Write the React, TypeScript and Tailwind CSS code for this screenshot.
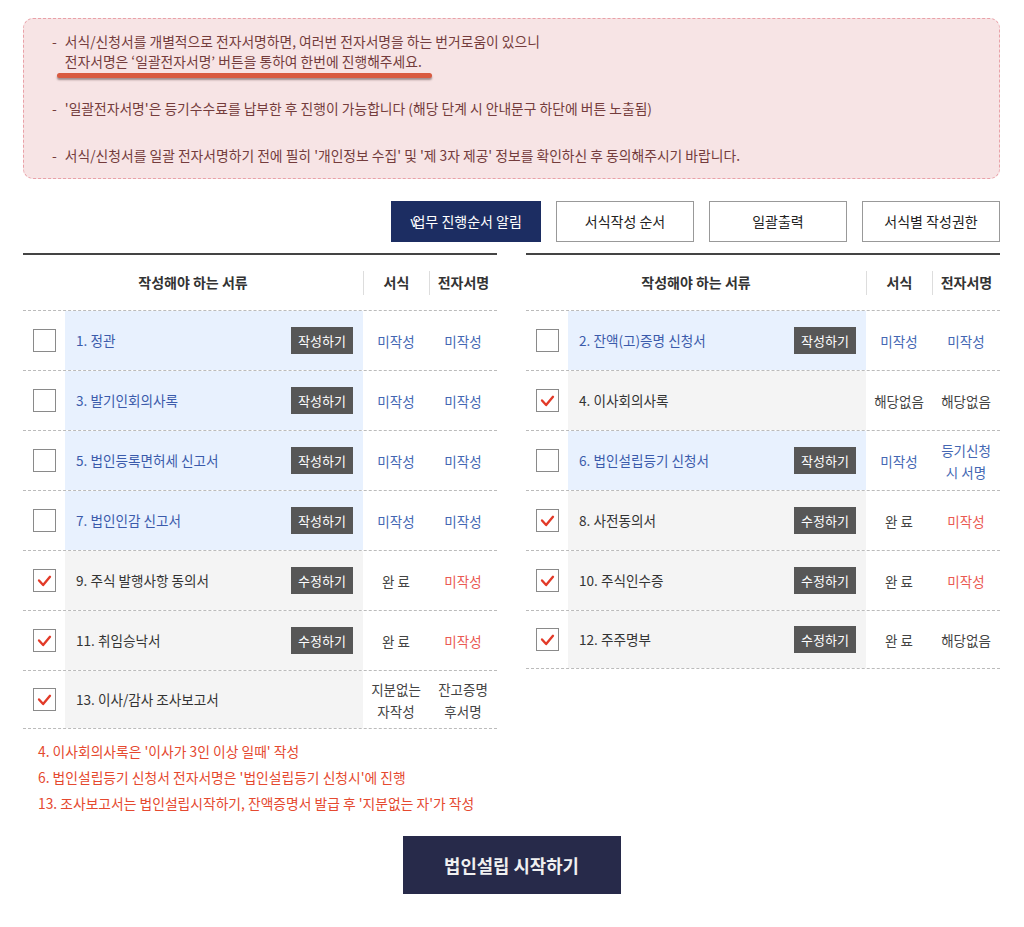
type Tone = 'blue' | 'red' | 'gray';

interface Cell {
  text: string;
  tone: Tone;
}

interface DocRow {
  no: number;
  name: string;
  done: boolean;
  action?: '작성하기' | '수정하기';
  form: Cell;
  sign: Cell;
}

const TONE: Record<Tone, string> = {
  blue: 'text-[#4467b3]',
  red: 'text-[#ea5a52]',
  gray: 'text-[#444]',
};

const todo: Cell = { text: '미작성', tone: 'blue' };
const todoRed: Cell = { text: '미작성', tone: 'red' };
const finished: Cell = { text: '완 료', tone: 'gray' };
const none: Cell = { text: '해당없음', tone: 'gray' };

const leftRows: DocRow[] = [
  { no: 1, name: '정관', done: false, action: '작성하기', form: todo, sign: todo },
  { no: 3, name: '발기인회의사록', done: false, action: '작성하기', form: todo, sign: todo },
  { no: 5, name: '법인등록면허세 신고서', done: false, action: '작성하기', form: todo, sign: todo },
  { no: 7, name: '법인인감 신고서', done: false, action: '작성하기', form: todo, sign: todo },
  { no: 9, name: '주식 발행사항 동의서', done: true, action: '수정하기', form: finished, sign: todoRed },
  { no: 11, name: '취임승낙서', done: true, action: '수정하기', form: finished, sign: todoRed },
  {
    no: 13,
    name: '이사/감사 조사보고서',
    done: true,
    form: { text: '지분없는\n자작성', tone: 'gray' },
    sign: { text: '잔고증명\n후서명', tone: 'gray' },
  },
];

const rightRows: DocRow[] = [
  { no: 2, name: '잔액(고)증명 신청서', done: false, action: '작성하기', form: todo, sign: todo },
  { no: 4, name: '이사회의사록', done: true, form: none, sign: none },
  {
    no: 6,
    name: '법인설립등기 신청서',
    done: false,
    action: '작성하기',
    form: todo,
    sign: { text: '등기신청\n시 서명', tone: 'blue' },
  },
  { no: 8, name: '사전동의서', done: true, action: '수정하기', form: finished, sign: todoRed },
  { no: 10, name: '주식인수증', done: true, action: '수정하기', form: finished, sign: todoRed },
  { no: 12, name: '주주명부', done: true, action: '수정하기', form: finished, sign: none },
];

function CheckBox({ checked }: { checked: boolean }) {
  return (
    <span className="flex h-[23px] w-[23px] items-center justify-center border border-[#8a8a8a] bg-white">
      {checked && (
        <svg viewBox="0 0 23 23" className="h-[23px] w-[23px]" aria-hidden>
          <polyline
            points="5.5,11.5 10,16.5 17.5,7.5"
            fill="none"
            stroke="#e23a28"
            strokeWidth="2.6"
            strokeLinecap="round"
            strokeLinejoin="round"
          />
        </svg>
      )}
    </span>
  );
}

function StatusCell({ cell, width }: { cell: Cell; width: string }) {
  return (
    <div className={`${width} whitespace-pre-line text-center text-[13.5px] leading-[22px] ${TONE[cell.tone]}`}>
      {cell.text}
    </div>
  );
}

function DocTable({ rows }: { rows: DocRow[] }) {
  return (
    <div className="w-[474px] border-t-2 border-[#444]">
      <div className="flex h-[56px] items-center border-b border-dashed border-[#bbb] text-[14px] font-bold text-[#333]">
        <div className="w-[340px] text-center">작성해야 하는 서류</div>
        <div className="h-[24px] w-px bg-[#ddd]" />
        <div className="w-[65px] text-center">서식</div>
        <div className="h-[24px] w-px bg-[#ddd]" />
        <div className="w-[67px] text-center">전자서명</div>
      </div>
      {rows.map((row) => (
        <div key={row.no} className="flex h-[60px] items-center border-b border-dashed border-[#bbb] last:h-[58px]">
          <div className="flex w-[42px] justify-center">
            <CheckBox checked={row.done} />
          </div>
          <div
            className={`flex h-full w-[298px] items-center justify-between pl-[11px] pr-[10px] ${
              row.done ? 'bg-[#f4f4f4]' : 'bg-[#e8f1fe]'
            }`}
          >
            <span className={`text-[13.6px] ${row.done ? 'text-[#333]' : 'text-[#3b5bab]'}`}>
              {row.no}. {row.name}
            </span>
            {row.action && (
              <span className="flex h-[27px] w-[62px] items-center justify-center bg-[#575757] text-[13px] text-white">
                {row.action}
              </span>
            )}
          </div>
          <StatusCell cell={row.form} width="w-[66px]" />
          <StatusCell cell={row.sign} width="w-[68px]" />
        </div>
      ))}
    </div>
  );
}

const topButtons = ['서식작성 순서', '일괄출력', '서식별 작성권한'];

export default function App() {
  return (
    <div className="min-h-[927px] bg-white font-['Noto_Sans_CJK_KR',sans-serif]">
      <div className="ml-[23px] w-[977px] pt-[18px]">
        {/* 안내 문구 */}
        <div className="h-[161px] rounded-[10px] border border-dashed border-[#e9a1a8] bg-[#f7e4e5] pl-[28px] pt-[12px] text-[13.8px] leading-[20px] text-[#743c3c]">
          <ul className="space-y-[27px]">
            <li className="relative flex gap-[8px]">
              <span>-</span>
              <span>
                서식/신청서를 개별적으로 전자서명하면, 여러번 전자서명을 하는 번거로움이 있으니
                <br />
                전자서명은 ‘일괄전자서명’ 버튼을 통하여 한번에 진행해주세요.
              </span>
              <span className="absolute left-[5px] top-[42px] h-[5px] w-[375px] rounded-full bg-[#d95a40] shadow-[0_2px_2px_rgba(60,30,30,0.45)]" />
            </li>
            <li className="flex gap-[8px]">
              <span>-</span>
              <span>'일괄전자서명'은 등기수수료를 납부한 후 진행이 가능합니다 (해당 단계 시 안내문구 하단에 버튼 노출됨)</span>
            </li>
            <li className="flex gap-[8px]">
              <span>-</span>
              <span>서식/신청서를 일괄 전자서명하기 전에 필히 '개인정보 수집' 및 '제 3자 제공' 정보를 확인하신 후 동의해주시기 바랍니다.</span>
            </li>
          </ul>
        </div>

        {/* 상단 버튼 */}
        <div className="mt-[22px] flex justify-end gap-[15px]">
          <button className="flex h-[41px] w-[150px] items-center justify-center bg-[#1c2d62] text-[14px] text-white">
            <span className="-mr-[5px]">v</span>업무 진행순서 알림
          </button>
          {topButtons.map((label) => (
            <button
              key={label}
              className="flex h-[41px] w-[138px] items-center justify-center border border-[#999] bg-white text-[14px] text-[#222]"
            >
              {label}
            </button>
          ))}
        </div>

        {/* 서류 목록 */}
        <div className="mt-[11px] flex items-start justify-between">
          <div>
            <DocTable rows={leftRows} />
            <div className="mt-[9px] pl-[15px] text-[13.8px] leading-[26px] text-[#e5492f]">
              <p>4. 이사회의사록은 '이사가 3인 이상 일때' 작성</p>
              <p>6. 법인설립등기 신청서 전자서명은 '법인설립등기 신청시'에 진행</p>
              <p>13. 조사보고서는 법인설립시작하기, 잔액증명서 발급 후 '지분없는 자'가 작성</p>
            </div>
          </div>
          <DocTable rows={rightRows} />
        </div>

        <div className="mt-[20px] flex justify-center">
          <button className="h-[58px] w-[218px] bg-[#272a4a] text-[17.8px] font-bold text-[#f0f0f0]">
            법인설립 시작하기
          </button>
        </div>
      </div>
    </div>
  );
}
